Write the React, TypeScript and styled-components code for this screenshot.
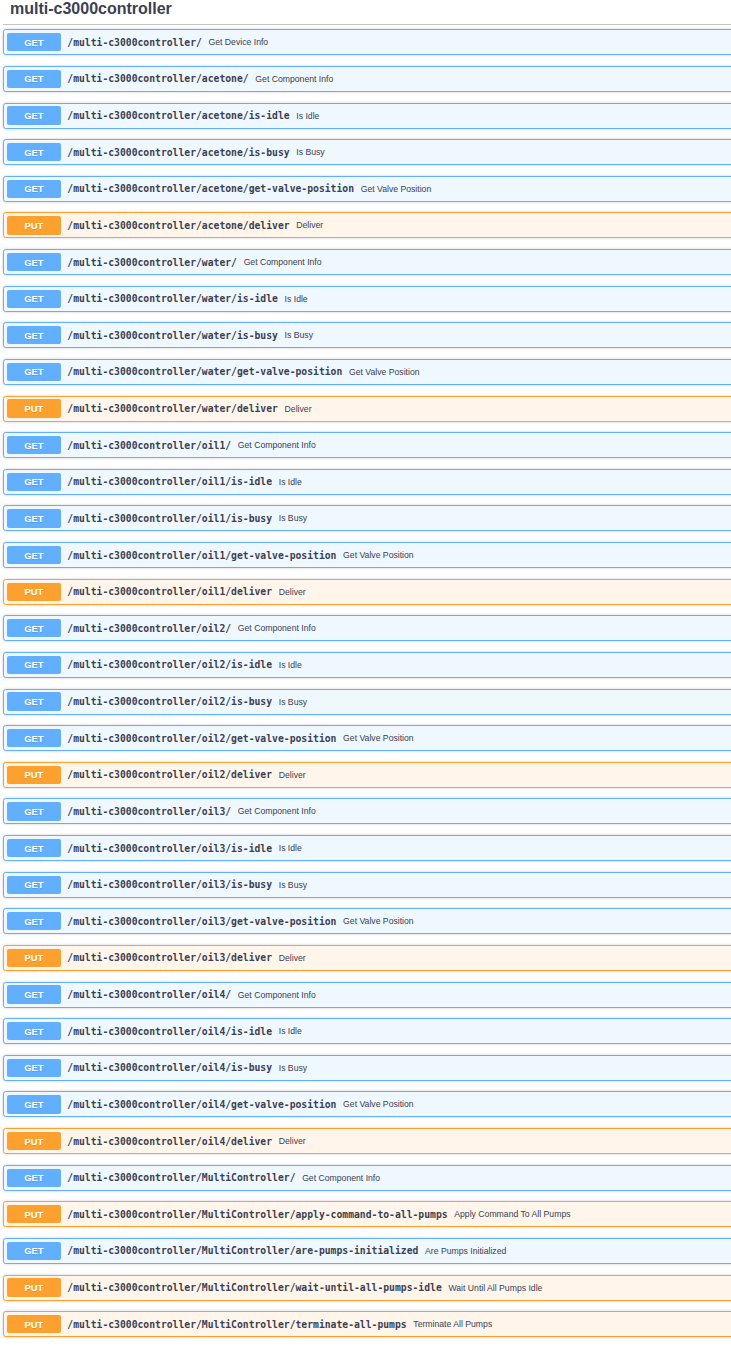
import React from "react";
import styled, { createGlobalStyle } from "styled-components";

const Global = createGlobalStyle`
  html, body { margin: 0; padding: 0; background: #fff; overflow: hidden; }
  body { font-family: "Liberation Sans", Arial, sans-serif; color: #3b4151; }
`;

type Method = "GET" | "PUT";

const colors: Record<Method, { main: string; bg: string }> = {
  GET: { main: "#61affe", bg: "#eff7ff" },
  PUT: { main: "#fca130", bg: "#fff5ea" },
};

const Page = styled.div`
  width: 731px;
  box-sizing: border-box;
  padding: 0 0 0 3px;
  overflow: hidden;
`;

const Tag = styled.h3`
  margin: 0 -8px 4.3px 0;
  padding: 0 0 6px 7px;
  font-family: "Liberation Sans", Arial, sans-serif;
  font-weight: 700;
  font-size: 16px;
  line-height: 18px;
  color: #3b4151;
  border-bottom: 1px solid rgba(59, 65, 81, 0.3);
`;

const Block = styled.div<{ $m: Method }>`
  box-sizing: border-box;
  height: 26px;
  margin: 0 -8px 10.63px 0;
  padding: 0 3.33px;
  display: flex;
  align-items: center;
  border: 1px solid ${(p) => colors[p.$m].main};
  background: ${(p) => colors[p.$m].bg};
  border-radius: 2.7px;
  box-shadow: 0 0 3px rgba(0, 0, 0, 0.19);
`;

const MethodBtn = styled.span<{ $m: Method }>`
  flex: none;
  width: 53.3px;
  height: 18.3px;
  display: flex;
  align-items: center;
  justify-content: center;
  background: ${(p) => colors[p.$m].main};
  border-radius: 2px;
  color: #fff;
  font-family: "Liberation Sans", Arial, sans-serif;
  font-weight: 700;
  font-size: 9.4px;
  text-shadow: 0 1px 0 rgba(0, 0, 0, 0.1);
`;

const Path = styled.span`
  padding: 0 6.67px;
  font-family: "DejaVu Sans Mono", "Liberation Mono", monospace;
  font-weight: 700;
  font-size: 9.72px;
  color: #3b4151;
  white-space: nowrap;
`;

const Summary = styled.span`
  font-family: "Liberation Sans", Arial, sans-serif;
  font-size: 8.67px;
  color: #3b4151;
  white-space: nowrap;
`;

const P = "/multi-c3000controller/";

const rows: [Method, string, string][] = [["GET", P, "Get Device Info"]];
for (const c of ["acetone", "water", "oil1", "oil2", "oil3", "oil4"]) {
  rows.push(["GET", `${P}${c}/`, "Get Component Info"]);
  rows.push(["GET", `${P}${c}/is-idle`, "Is Idle"]);
  rows.push(["GET", `${P}${c}/is-busy`, "Is Busy"]);
  rows.push(["GET", `${P}${c}/get-valve-position`, "Get Valve Position"]);
  rows.push(["PUT", `${P}${c}/deliver`, "Deliver"]);
}
rows.push(["GET", `${P}MultiController/`, "Get Component Info"]);
rows.push(["PUT", `${P}MultiController/apply-command-to-all-pumps`, "Apply Command To All Pumps"]);
rows.push(["GET", `${P}MultiController/are-pumps-initialized`, "Are Pumps Initialized"]);
rows.push(["PUT", `${P}MultiController/wait-until-all-pumps-idle`, "Wait Until All Pumps Idle"]);
rows.push(["PUT", `${P}MultiController/terminate-all-pumps`, "Terminate All Pumps"]);

export default function App() {
  return (
    <>
      <Global />
      <Page>
        <Tag>multi-c3000controller</Tag>
        {rows.map(([m, path, sum]) => (
          <Block key={m + path} $m={m}>
            <MethodBtn $m={m}>{m}</MethodBtn>
            <Path>{path}</Path>
            <Summary>{sum}</Summary>
          </Block>
        ))}
      </Page>
    </>
  );
}
